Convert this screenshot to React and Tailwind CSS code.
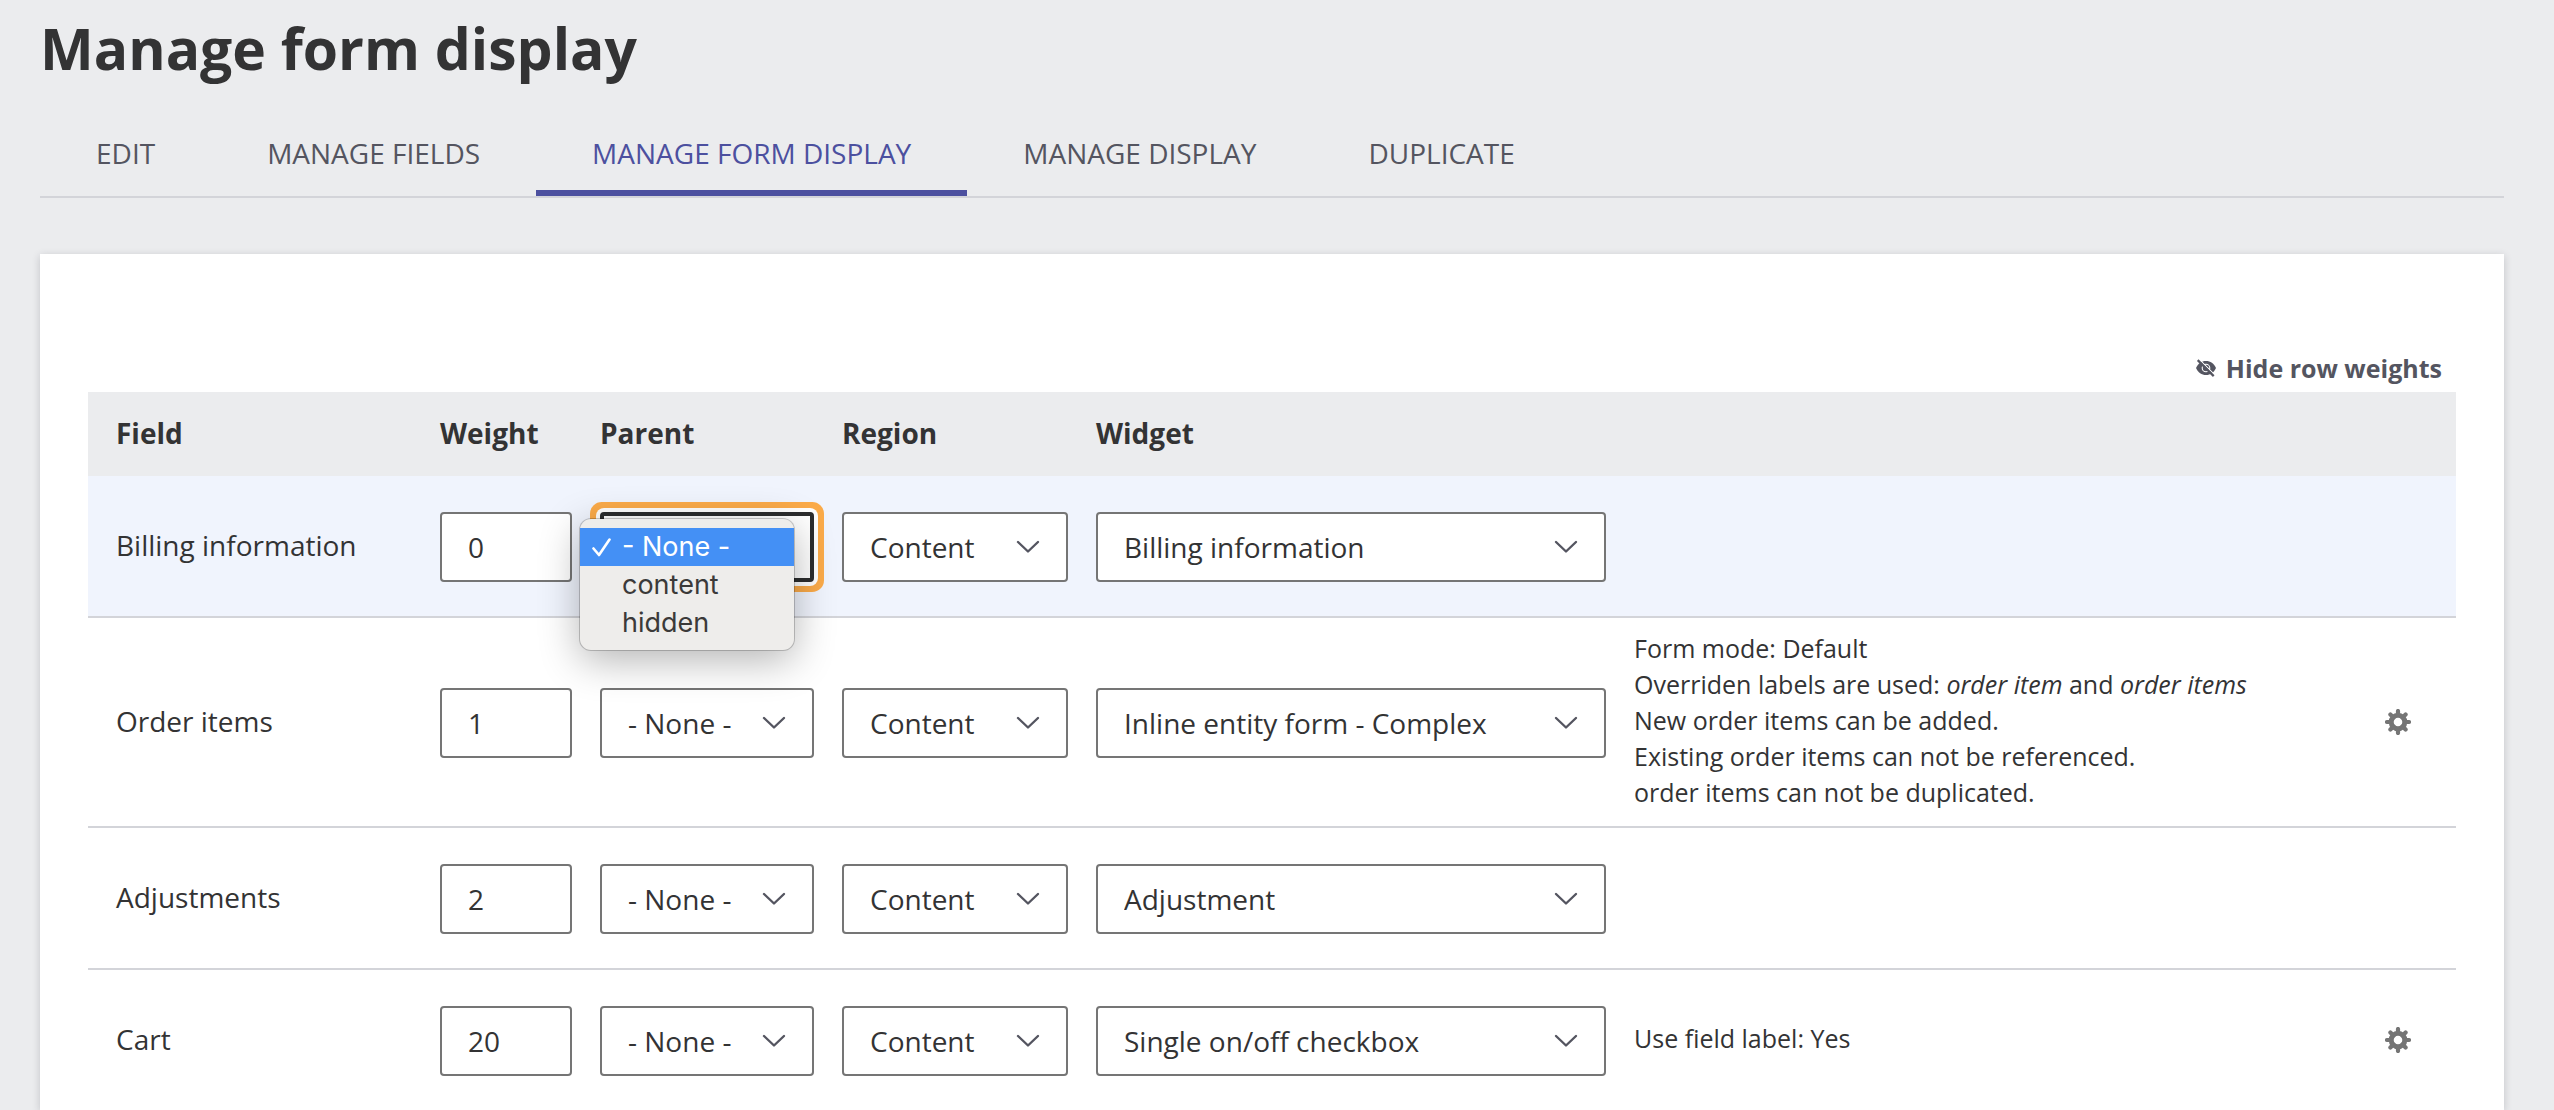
import React from 'react';

const tabs = ['Edit', 'Manage fields', 'Manage form display', 'Manage display', 'Duplicate'];

const rows = [
  { name: 'Billing information', weight: '0', widget: 'Billing information', open: true },
  {
    name: 'Order items',
    weight: '1',
    widget: 'Inline entity form - Complex',
    summary: (
      <>
        Form mode: Default
        <br />
        Overriden labels are used: <em>order item</em> and <em>order items</em>
        <br />
        New order items can be added.
        <br />
        Existing order items can not be referenced.
        <br />
        order items can not be duplicated.
      </>
    ),
  },
  { name: 'Adjustments', weight: '2', widget: 'Adjustment' },
  { name: 'Cart', weight: '20', widget: 'Single on/off checkbox', summary: 'Use field label: Yes' },
];

function Select({ label, options, focused }) {
  return (
    <div className="relative">
      <select
        aria-label={label}
        className={
          focused
            ? 'block h-[70px] w-full appearance-none rounded-[4px] border-4 border-[#2c2d2e] bg-white pr-16 pl-6 text-[28px] shadow-[0_0_0_4px_#fff,0_0_0_10px_#fbab49] outline-none'
            : 'block h-[70px] w-full appearance-none rounded-[4px] border-2 border-[#757575] bg-white pr-16 pl-[26px] text-[28px] outline-none'
        }
      >
        {options.map((o) => (
          <option key={o}>{o}</option>
        ))}
      </select>
      <svg
        className="pointer-events-none absolute top-7 right-7 h-[14px] w-6"
        viewBox="0 0 24 14"
        fill="none"
        stroke="#545560"
        strokeWidth="2.4"
        strokeLinecap="round"
        strokeLinejoin="round"
        aria-hidden="true"
      >
        <path d="M2 2l10 9.5L22 2" />
      </svg>
    </div>
  );
}

function ParentMenu() {
  return (
    <ul
      role="listbox"
      aria-label="Parent options"
      className="absolute top-[7px] -left-5 z-10 w-[214px] rounded-[11px] bg-[#eeedeb] pt-[9px] pb-2 font-['Inter',sans-serif] text-[27px] leading-[38px] text-[#3b3a39] shadow-[0_0_0_1px_rgba(0,0,0,0.2),0_10px_40px_rgba(0,0,0,0.3)]"
    >
      <li role="option" aria-selected="true" className="flex items-center bg-[#4490f5] pl-3 text-white">
        <svg className="mr-[11px] h-[19px] w-[19px]" viewBox="0 0 19 19" fill="none" stroke="currentColor" strokeWidth="2.6" strokeLinecap="round" strokeLinejoin="round" aria-hidden="true">
          <path d="M1.5 10.5L7 17 17.5 1.5" />
        </svg>
        - None -
      </li>
      <li role="option" aria-selected="false" className="pl-[42px]">content</li>
      <li role="option" aria-selected="false" className="pl-[42px]">hidden</li>
    </ul>
  );
}

function Gear() {
  return (
    <svg className="block h-[26px] w-[26px]" viewBox="0 0 26 26" fill="none" stroke="#757575" aria-hidden="true">
      <circle cx="13" cy="13" r="6.8" strokeWidth="5" />
      <path
        d="M13 2v4M13 20v4M2 13h4M20 13h4M5.4 5.4l3 3M17.6 17.6l3 3M20.6 5.4l-3 3M8.4 17.6l-3 3"
        strokeWidth="4.2"
        strokeLinecap="round"
      />
    </svg>
  );
}

function EyeOff() {
  return (
    <svg className="h-5 w-5" viewBox="0 0 20 20" fill="none" aria-hidden="true">
      <path d="M0 10C2 5.5 5.6 3 10 3s8 2.5 10 7c-2 4.5-5.6 7-10 7S2 14.5 0 10z" fill="#545560" />
      <circle cx="10" cy="10" r="3.8" stroke="#fff" strokeWidth="1.1" />
      <path d="M3.5 1.7l15 15" stroke="#fff" strokeWidth="1.2" />
      <path d="M1.7 2.1l16 16" stroke="#545560" strokeWidth="2.2" />
    </svg>
  );
}

export default function App() {
  return (
    <div className="flex min-h-screen flex-col bg-[#ebecee] pr-[50px] pl-10 font-['Open_Sans',sans-serif] text-[28px] text-[#333334]">
      <h1 className="pt-2 text-[57px] leading-[80px] font-bold">Manage form display</h1>
      <nav aria-label="Primary tabs" className="mt-6 flex border-b-2 border-[#d3d4d9]">
        {tabs.map((t) => (
          <a
            key={t}
            href="#"
            aria-current={t === 'Manage form display' ? 'page' : undefined}
            className={
              t === 'Manage form display'
                ? 'border-b-[6px] border-[#4c509f] px-14 pt-[22px] pb-[18px] leading-[38px] text-[#4c509f] uppercase'
                : 'border-b-[6px] border-transparent px-14 pt-[22px] pb-[18px] leading-[38px] text-[#545560] uppercase'
            }
          >
            {t}
          </a>
        ))}
      </nav>
      <main className="mt-14 flex-1 bg-white px-12 pt-24 shadow-[0_2px_8px_rgba(34,35,48,0.2)]">
        <div className="flex justify-end pr-[14px] pb-1.5">
          <button type="button" className="flex items-center gap-2.5 text-[25px] leading-9 font-bold text-[#545560]">
            <EyeOff />
            Hide row weights
          </button>
        </div>
        <table className="w-full table-fixed border-collapse text-left">
          <colgroup>
            <col className="w-[324px]" />
            <col className="w-[160px]" />
            <col className="w-[242px]" />
            <col className="w-[254px]" />
            <col className="w-[538px]" />
            <col />
            <col className="w-[99px]" />
          </colgroup>
          <thead>
            <tr className="h-[84px] bg-[#ebecee]">
              <th scope="col" className="pb-0.5 pl-7">Field</th>
              <th scope="col" className="pb-0.5 pl-7">Weight</th>
              <th scope="col" className="pb-0.5 pl-7">Parent</th>
              <th scope="col" className="pb-0.5 pl-7">Region</th>
              <th scope="col" className="pb-0.5 pl-7">Widget</th>
              <th scope="col" aria-label="Summary" />
              <th scope="col" aria-label="Operations" />
            </tr>
          </thead>
          <tbody>
            {rows.map((r) => (
              <tr
                key={r.name}
                className={r.open ? 'border-b-2 border-[#d3d4d9] bg-[#f0f4fd]' : 'border-b-2 border-[#d3d4d9] last:border-b-0'}
              >
                <td className="pb-0.5 pl-7">{r.name}</td>
                <td className="pt-9 pb-[34px] pl-7">
                  <input
                    type="text"
                    aria-label={`Weight for ${r.name}`}
                    defaultValue={r.weight}
                    className="block h-[70px] w-full rounded-[4px] border-2 border-[#757575] bg-white pl-[26px] outline-none"
                  />
                </td>
                <td className="pt-9 pb-[34px] pl-7">
                  <div className="relative">
                    <Select label={`Parent for ${r.name}`} options={['- None -', 'content', 'hidden']} focused={r.open} />
                    {r.open && <ParentMenu />}
                  </div>
                </td>
                <td className="pt-9 pb-[34px] pl-7">
                  <Select label={`Region for ${r.name}`} options={['Content', 'Disabled']} />
                </td>
                <td className="pt-9 pb-[34px] pl-7">
                  <Select label={`Widget for ${r.name}`} options={[r.widget]} />
                </td>
                <td className="pt-3 pb-4 pl-7 text-[25px] leading-9">{r.summary}</td>
                <td className="pl-7">
                  {r.summary && (
                    <button type="button" aria-label={`Edit ${r.name} settings`} className="block">
                      <Gear />
                    </button>
                  )}
                </td>
              </tr>
            ))}
          </tbody>
        </table>
      </main>
    </div>
  );
}
